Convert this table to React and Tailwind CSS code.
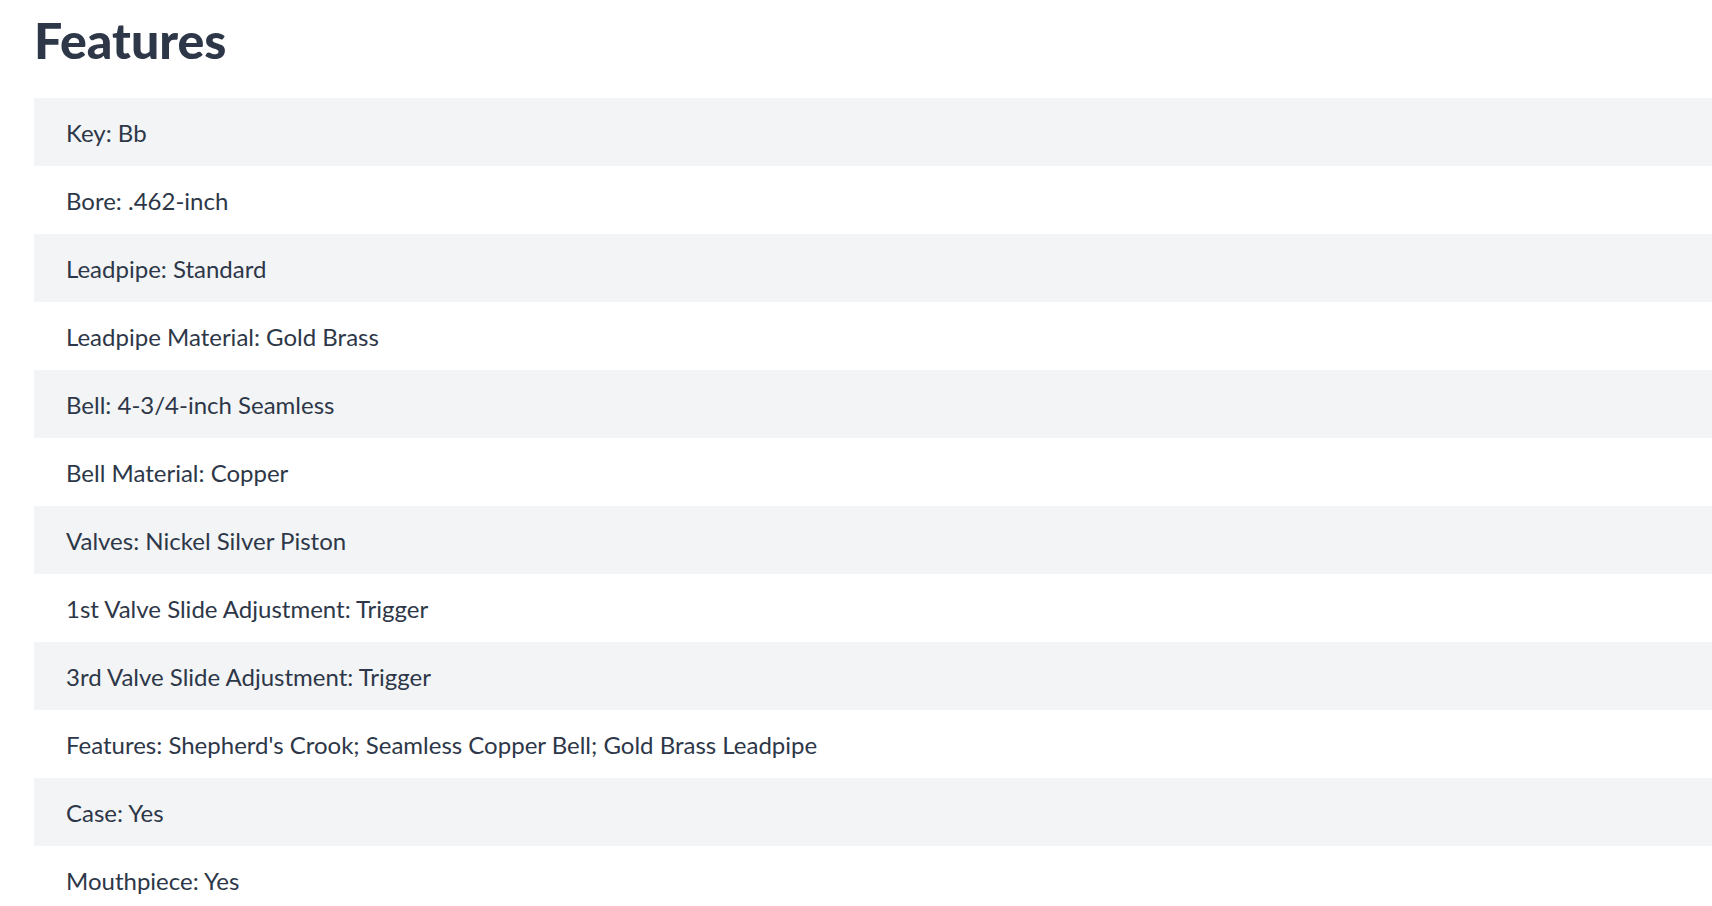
const features = [
  'Key: Bb',
  'Bore: .462-inch',
  'Leadpipe: Standard',
  'Leadpipe Material: Gold Brass',
  'Bell: 4-3/4-inch Seamless',
  'Bell Material: Copper',
  'Valves: Nickel Silver Piston',
  '1st Valve Slide Adjustment: Trigger',
  '3rd Valve Slide Adjustment: Trigger',
  "Features: Shepherd's Crook; Seamless Copper Bell; Gold Brass Leadpipe",
  'Case: Yes',
  'Mouthpiece: Yes',
]

export default function App() {
  return (
    <div className="min-h-screen bg-white pl-[34px] text-[#2d3748] font-['Lato',sans-serif]">
      <h1 className="pt-[6px] pb-[24px] text-[50px] leading-[68px] font-black">Features</h1>
      <ul>
        {features.map((f, i) => (
          <li key={i} className={`h-[68px] flex items-center px-8 pt-[2px] text-[24px] ${i % 2 === 0 ? 'bg-[#f3f4f6]' : 'bg-white'}`}>
            {f}
          </li>
        ))}
      </ul>
    </div>
  )
}
